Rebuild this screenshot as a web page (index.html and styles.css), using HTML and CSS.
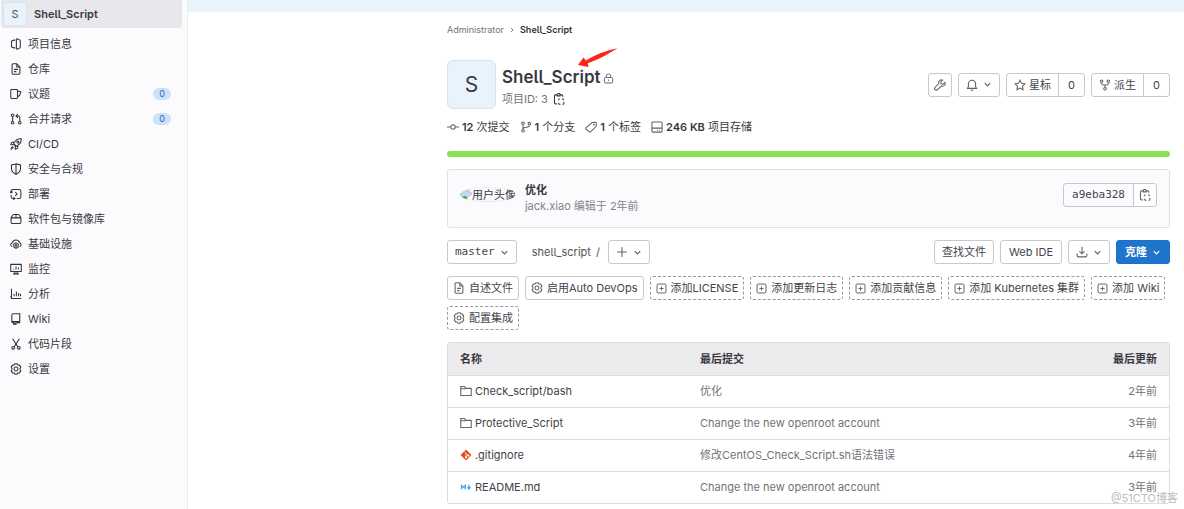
FILE: index.html
```html
<!DOCTYPE html>
<html lang="zh-CN">
<head>
<meta charset="utf-8">
<meta name="viewport" content="width=device-width, initial-scale=1">
<title>Shell_Script</title>
<link rel="stylesheet" href="styles.css">
</head>
<body>
<svg class="sprite" aria-hidden="true">
  <symbol id="i-info" viewBox="0 0 16 16"><path d="M7 2.500 3.500 3.500A1.500 1.500 0 0 0 2 5v6a1.500 1.500 0 0 0 1.500 1.500l3.500 1M8.500 2.200v11.600l1 1.200 3.300-1.500a1.500 1.500 0 0 0 .9-1.400V3.900a1.500 1.500 0 0 0-.9-1.400L9.500 1z"/></symbol>
  <symbol id="i-doc" viewBox="0 0 16 16"><path d="M9 1H4a1.200 1.200 0 0 0-1.200 1.200v11.600A1.200 1.200 0 0 0 4 15h8a1.200 1.200 0 0 0 1.200-1.200V5.200zM9 1v4.200h4.200M5.500 8.500h5M5.500 11.500h3"/></symbol>
  <symbol id="i-issue" viewBox="0 0 16 16"><path d="M10 3.200v9.600a1.200 1.200 0 0 1-1.200 1.200H2.200A1.200 1.200 0 0 1 1 12.800V3.200A1.200 1.200 0 0 1 2.200 2H8.800A1.200 1.200 0 0 1 10 3.200zM10 4l4.500 1.200-1.500 4.300L10 12"/></symbol>
  <symbol id="i-merge" viewBox="0 0 16 16"><circle cx="3.500" cy="3" r="1.700"/><circle cx="3.500" cy="13" r="1.700"/><circle cx="13" cy="13" r="1.700"/><path d="M3.500 5v6M13 11V6a2 2 0 0 0-2-2H8.500M10.500 1.500 8 4l2.500 2.500"/></symbol>
  <symbol id="i-rocket" viewBox="0 0 16 16"><path d="M15 1c-5-.3-8 2-10 6.500L8.500 11C13 9 15.300 6 15 1zM6 5.500l-3.500.3L1 8.800l4 .2M10.500 10l-.3 3.500-3 1.500-.2-4M3.500 11 1 15l4-2.500M4.500 8l3.500 3.500"/><circle cx="10.500" cy="5.500" r="1.200"/></symbol>
  <symbol id="i-shield" viewBox="0 0 16 16"><path d="M8 1.200 2 2.500V8c0 3 2.300 5.200 6 7 3.700-1.800 6-4 6-7V2.500zM8 1.200V15"/></symbol>
  <symbol id="i-deploy" viewBox="0 0 16 16"><path d="M1.500 6V4.500A2.500 2.500 0 0 1 4 2h8a2.500 2.500 0 0 1 2.500 2.500v7A2.500 2.500 0 0 1 12 14H9M1.500 9v2.500A2.500 2.500 0 0 0 4 14h2M0 4.500l1.500 2 2-1.500M7 5.500 9.500 8 7 10.500M4.500 12.200 6.500 14l-2 1.700"/></symbol>
  <symbol id="i-package" viewBox="0 0 16 16"><path d="M1.500 6.500h13v6.300a1.200 1.200 0 0 1-1.200 1.200H2.700a1.200 1.200 0 0 1-1.200-1.200zM1.500 6.500 3.700 2.800A1.500 1.500 0 0 1 5 2h6a1.500 1.500 0 0 1 1.300.8l2.200 3.700M8 2v4.500"/></symbol>
  <symbol id="i-cloud" viewBox="0 0 16 16"><path d="M2.800 11.500a2.800 2.800 0 0 1 .4-5.300A5 5 0 0 1 12.700 6 3 3 0 0 1 13.200 11.500M8 6.500l3 1.700v3.700L8 13.700l-3-1.800V8.200z"/><circle cx="8" cy="10.100" r="1"/></symbol>
  <symbol id="i-monitor" viewBox="0 0 16 16"><path d="M1 1.800h14v9.400H1zM4 14.500h8M6.500 11.500v3M9.500 11.500v3M4.800 8.800V7.500M8 8.800V4.500M11.200 8.800V6"/></symbol>
  <symbol id="i-chart" viewBox="0 0 16 16"><path d="M2 1v13h13M.5 11.500H2M5.500 11V8M8.500 11V4.500M11.500 11V6.500M14 11V8"/></symbol>
  <symbol id="i-book" viewBox="0 0 16 16"><path d="M4.500 13H4a1.500 1.500 0 0 1-1.500-1.500v-9A1.500 1.500 0 0 1 4 1h9v12H9M3 11.500h10M5 11.500v3.800l1.500-1 1.500 1v-3.800"/></symbol>
  <symbol id="i-scissors" viewBox="0 0 16 16"><path d="m3.500 1 6.800 10.500M12.500 1 5.700 11.500"/><circle cx="4.200" cy="13" r="1.800"/><circle cx="11.800" cy="13" r="1.800"/></symbol>
  <symbol id="i-gear" viewBox="0 0 16 16"><path d="M6.500 1h3l1 1.600 2.100.2 1.800 2.700-1 1.700v1.600l1 1.700-1.800 2.700-2.100.2-1 1.600h-3l-1-1.600-2.100-.2-1.800-2.700 1-1.700V7.200l-1-1.700 1.800-2.700 2.100-.2z"/><circle cx="8" cy="8" r="2.600"/></symbol>
  <symbol id="i-lock" viewBox="0 0 16 16"><rect x="2" y="6.500" width="12" height="8" rx="1.500"/><path d="M4.800 6.500V4.500a3.200 3.200 0 0 1 6.400 0v2M8 9.500v2"/></symbol>
  <symbol id="i-copy" viewBox="0 0 16 16"><path d="M5 14.500H3.500A1.500 1.500 0 0 1 2 13V4a1.500 1.500 0 0 1 1.500-1.500H5M10 2.500h1.500A1.500 1.500 0 0 1 13 4v1M5.500 3.800V2.500a2 2 0 0 1 4 0v1.300zM7.500 9.500V9a1 1 0 0 1 1-1h.5M12 8h1a1 1 0 0 1 1 1v.5M14.500 12v2a1 1 0 0 1-1 1h-.8M10 15H8.500a1 1 0 0 1-1-1v-1"/></symbol>
  <symbol id="i-commit" viewBox="0 0 16 16"><circle cx="8" cy="8" r="2.900"/><path d="M0 8h5M11 8h5"/></symbol>
  <symbol id="i-branch" viewBox="0 0 16 16"><circle cx="4" cy="3" r="1.700"/><circle cx="4" cy="13" r="1.700"/><circle cx="12.500" cy="3.500" r="1.700"/><path d="M4 5v6M12.500 5.500C12.500 8 10 8 8 8.300 5.500 8.600 4 9 4 11"/></symbol>
  <symbol id="i-tag" viewBox="0 0 16 16"><path d="M9.500 2 14 1.800a1 1 0 0 1 1 1V7l-7.300 7.200a1.500 1.500 0 0 1-2.100 0L1.500 11a1.500 1.500 0 0 1 0-2.100z"/><circle cx="11.800" cy="4.800" r=".6"/></symbol>
  <symbol id="i-disk" viewBox="0 0 16 16"><rect x="1.200" y="1.200" width="13.600" height="13.600" rx="1.500"/><path d="M1.200 9.500h13.600M8 12.300h1M11 12.300h1"/></symbol>
  <symbol id="i-wrench" viewBox="0 0 16 16"><path d="M14.500 4.500 12 7l-2.500-.5L9 4l2.500-2.500C9 .3 5.800 2 6.300 6L1.500 11a2.200 2.200 0 0 0 3.300 3.300L9.800 9.500c4 .8 5.900-2.200 4.700-5z"/><path d="M3.300 12.700h.1"/></symbol>
  <symbol id="i-bell" viewBox="0 0 16 16"><path d="M1.800 12.500h12.400l-1.400-2.300V6.500a4.800 4.800 0 0 0-9.600 0v3.700zM6.200 14.500q1.800 1.200 3.600 0M8 1.500V.5"/></symbol>
  <symbol id="i-star" viewBox="0 0 16 16"><path d="m8 1.500 2 4.300 4.700.6-3.400 3.300.8 4.700L8 12.200l-4.100 2.200.8-4.700L1.300 6.400 6 5.800z"/></symbol>
  <symbol id="i-fork" viewBox="0 0 16 16"><circle cx="3.500" cy="3" r="1.700"/><circle cx="12.500" cy="3" r="1.700"/><circle cx="8" cy="13" r="1.700"/><path d="M3.500 5v.5a2.500 2.500 0 0 0 2.500 2.500h4a2.500 2.500 0 0 0 2.500-2.500V5M8 8v3"/></symbol>
  <symbol id="i-down" viewBox="0 0 16 16"><path d="m4 6 4 4 4-4"/></symbol>
  <symbol id="i-right" viewBox="0 0 16 16"><path d="m6 4 4 4-4 4"/></symbol>
  <symbol id="i-plus" viewBox="0 0 16 16"><path d="M8 1.500v13M1.500 8h13"/></symbol>
  <symbol id="i-download" viewBox="0 0 16 16"><path d="M8 1v9.500M4.500 7 8 10.500 11.500 7M1.500 10v3a1.500 1.500 0 0 0 1.500 1.500h10a1.500 1.500 0 0 0 1.500-1.500v-3"/></symbol>
  <symbol id="i-add" viewBox="0 0 16 16"><rect x="1.500" y="1.500" width="13" height="13" rx="1.500"/><path d="M8 5v6M5 8h6"/></symbol>
  <symbol id="i-folder" viewBox="0 0 16 16"><path d="M1 14V2h5l1.500 2.500H15V14zM1 5h6.500"/></symbol>
  <symbol id="i-git" viewBox="0 0 16 16"><path d="M8 1.200 14.800 8 8 14.800 1.200 8z" fill="#e64a19" stroke="#e64a19" stroke-width="1"/><path d="M6 3.500 8 5.500V11M8 6l3 3" stroke="#fff" stroke-width="1"/><circle cx="8" cy="11" r=".8" fill="#fff" stroke="#fff"/><circle cx="11" cy="8.800" r=".8" fill="#fff" stroke="#fff"/></symbol>
  <symbol id="i-md" viewBox="0 0 16 16"><path d="M2 11V6l2.500 2.500L7 6v5M12 5v5M9.800 8.300l2.200 2.200 2.200-2.200" stroke="#42a5f5" stroke-width="1.800"/></symbol>
</svg>

<div class="page">
  <aside class="sidebar">
    <a class="context" href="#"><span class="avatar-sm">S</span>Shell_Script</a>
    <nav class="menu" aria-label="项目导航">
      <a href="#"><svg class="icon"><use href="#i-info"/></svg>项目信息</a>
      <a href="#"><svg class="icon"><use href="#i-doc"/></svg>仓库</a>
      <a href="#"><svg class="icon"><use href="#i-issue"/></svg>议题<span class="badge">0</span></a>
      <a href="#"><svg class="icon"><use href="#i-merge"/></svg>合并请求<span class="badge">0</span></a>
      <a href="#"><svg class="icon"><use href="#i-rocket"/></svg>CI/CD</a>
      <a href="#"><svg class="icon"><use href="#i-shield"/></svg>安全与合规</a>
      <a href="#"><svg class="icon"><use href="#i-deploy"/></svg>部署</a>
      <a href="#"><svg class="icon"><use href="#i-package"/></svg>软件包与镜像库</a>
      <a href="#"><svg class="icon"><use href="#i-cloud"/></svg>基础设施</a>
      <a href="#"><svg class="icon"><use href="#i-monitor"/></svg>监控</a>
      <a href="#"><svg class="icon"><use href="#i-chart"/></svg>分析</a>
      <a href="#"><svg class="icon"><use href="#i-book"/></svg>Wiki</a>
      <a href="#"><svg class="icon"><use href="#i-scissors"/></svg>代码片段</a>
      <a href="#"><svg class="icon"><use href="#i-gear"/></svg>设置</a>
    </nav>
  </aside>

  <div class="content">
    <div class="banner"></div>
    <main class="main">
      <nav class="crumbs" aria-label="面包屑">
        <a href="#">Administrator</a>
        <svg class="icon icon-xs"><use href="#i-right"/></svg>
        <a class="current" href="#">Shell_Script</a>
      </nav>

      <header class="project">
        <div class="avatar">S</div>
        <div class="project-name">
          <h1>Shell_Script <svg class="icon icon-lock"><use href="#i-lock"/></svg>
            <svg class="pointer" viewBox="0 0 40 20" aria-hidden="true"><path d="M0 17 5.500 9.500 8 12.500C17 7 28 2.500 39.500.3 30 6 20 12 9.800 15.300L10.500 19z"/></svg>
          </h1>
          <p class="project-id">项目ID: 3 <button class="bare" aria-label="复制项目ID"><svg class="icon dark"><use href="#i-copy"/></svg></button></p>
        </div>
        <div class="actions">
          <button class="btn square" aria-label="管理"><svg class="icon"><use href="#i-wrench"/></svg></button>
          <button class="btn" aria-label="通知"><svg class="icon"><use href="#i-bell"/></svg><svg class="icon caret"><use href="#i-down"/></svg></button>
          <div class="group"><button class="btn"><svg class="icon"><use href="#i-star"/></svg>星标</button><a class="btn count" href="#">0</a></div>
          <div class="group"><button class="btn"><svg class="icon"><use href="#i-fork"/></svg>派生</button><a class="btn count" href="#">0</a></div>
        </div>
      </header>

      <nav class="stats" aria-label="项目统计">
        <a href="#"><svg class="icon"><use href="#i-commit"/></svg><span><b>12</b> 次提交</span></a>
        <a href="#"><svg class="icon"><use href="#i-branch"/></svg><span><b>1</b> 个分支</span></a>
        <a href="#"><svg class="icon"><use href="#i-tag"/></svg><span><b>1</b> 个标签</span></a>
        <a href="#"><svg class="icon"><use href="#i-disk"/></svg><span><b>246 KB</b> 项目存储</span></a>
      </nav>

      <div class="languages"></div>

      <section class="commit">
        <div class="broken"><svg viewBox="0 0 14 12"><path d="M.5.5h9l4 4v7H.5z" fill="#c0d6f5" stroke="#a9b3c1"/><path d="M1 11q4-6 8-1l1 1z" fill="#49a832"/><path d="M7 12 14 6v6z" fill="#fff"/></svg><span>用户头像</span></div>
        <div class="commit-text">
          <a class="commit-title" href="#">优化</a>
          <p>jack.xiao 编辑于 2年前</p>
        </div>
        <div class="group"><span class="btn mono sha">a9eba328</span><button class="btn square" aria-label="复制提交SHA"><svg class="icon"><use href="#i-copy"/></svg></button></div>
      </section>

      <div class="tree">
        <button class="btn mono">master<svg class="icon caret"><use href="#i-down"/></svg></button>
        <div class="path"><a href="#">shell_script</a><span>/</span></div>
        <button class="btn" aria-label="添加"><svg class="icon"><use href="#i-plus"/></svg><svg class="icon caret"><use href="#i-down"/></svg></button>
        <div class="actions">
          <a class="btn" href="#">查找文件</a>
          <button class="btn wide">Web IDE</button>
          <button class="btn" aria-label="下载"><svg class="icon"><use href="#i-download"/></svg><svg class="icon caret"><use href="#i-down"/></svg></button>
          <button class="btn wide primary">克隆<svg class="icon caret"><use href="#i-down"/></svg></button>
        </div>
      </div>

      <div class="shortcuts">
        <a class="btn" href="#"><svg class="icon"><use href="#i-doc"/></svg>自述文件</a>
        <a class="btn" href="#"><svg class="icon"><use href="#i-gear"/></svg>启用Auto DevOps</a>
        <a class="btn dashed" href="#"><svg class="icon small"><use href="#i-add"/></svg>添加LICENSE</a>
        <a class="btn dashed" href="#"><svg class="icon small"><use href="#i-add"/></svg>添加更新日志</a>
        <a class="btn dashed" href="#"><svg class="icon small"><use href="#i-add"/></svg>添加贡献信息</a>
        <a class="btn dashed" href="#"><svg class="icon small"><use href="#i-add"/></svg>添加 Kubernetes 集群</a>
        <a class="btn dashed" href="#"><svg class="icon small"><use href="#i-add"/></svg>添加 Wiki</a>
        <a class="btn dashed" href="#"><svg class="icon"><use href="#i-gear"/></svg>配置集成</a>
      </div>

      <div class="files">
        <table>
          <thead><tr><th class="c-name">名称</th><th>最后提交</th><th class="c-date">最后更新</th></tr></thead>
          <tbody>
            <tr><td><a href="#"><svg class="icon"><use href="#i-folder"/></svg>Check_script/bash</a></td><td class="muted">优化</td><td class="muted c-date">2年前</td></tr>
            <tr><td><a href="#"><svg class="icon"><use href="#i-folder"/></svg>Protective_Script</a></td><td class="muted">Change the new openroot account</td><td class="muted c-date">3年前</td></tr>
            <tr><td><a href="#"><svg class="icon"><use href="#i-git"/></svg>.gitignore</a></td><td class="muted">修改CentOS_Check_Script.sh语法错误</td><td class="muted c-date">4年前</td></tr>
            <tr><td><a href="#"><svg class="icon"><use href="#i-md"/></svg>README.md</a></td><td class="muted">Change the new openroot account</td><td class="muted c-date">3年前</td></tr>
          </tbody>
        </table>
      </div>
    </main>
  </div>
  <div class="watermark">@51CTO博客</div>
</div>
</body>
</html>
```
FILE: styles.css
```css
* { box-sizing: border-box; }

body {
  margin: 0;
  background: #fff;
  color: #3a383f;
  font: 11px/16px Inter, "Noto Sans CJK SC", sans-serif;
  font-feature-settings: "cv05";
}

a { color: inherit; text-decoration: none; }
h1, p { margin: 0; }
button { font: inherit; font-feature-settings: inherit; color: inherit; cursor: pointer; }
b { font-weight: 600; }

.sprite { position: absolute; width: 0; height: 0; }

.icon {
  width: 12px;
  height: 12px;
  flex: none;
  fill: none;
  stroke: #626168;
  stroke-width: 1.4;
}
.icon.small { width: 11px; height: 11px; }
.icon.caret { width: 11px; height: 11px; stroke-width: 1.7; }
.icon.dark { stroke: #333238; }
.icon-xs { width: 8px; height: 8px; stroke-width: 1.6; }

.page { position: relative; display: flex; min-height: 100vh; overflow: hidden; }

/* Sidebar */
.sidebar {
  flex: none;
  width: 188px;
  background: #fbfafd;
  border-right: 1px solid #ececef;
}
.context {
  display: flex;
  align-items: center;
  gap: 7px;
  height: 28px;
  margin: 0 5px 0 1px;
  padding-left: 2px;
  background: #e8e7ec;
  border-radius: 0 0 3px 3px;
  font-weight: 600;
}
.avatar-sm {
  width: 24px;
  height: 24px;
  border: 1px solid #d6e2ee;
  border-radius: 3px;
  background: #e9f3fc;
  color: #535158;
  font-weight: 400;
  line-height: 22px;
  text-align: center;
}
.menu { display: flex; flex-direction: column; padding-top: 3px; }
.menu a {
  display: flex;
  align-items: center;
  gap: 6px;
  height: 25px;
  padding: 0 16px 0 10px;
}
.menu .icon { stroke: #333238; }
.badge {
  margin-left: auto;
  min-width: 18px;
  border-radius: 6px;
  background: #cbe2f9;
  color: #2f68b4;
  font-size: 9px;
  line-height: 12px;
  text-align: center;
}

/* Content column */
.content { flex: 1; min-width: 0; }
.banner { height: 12px; background: #e9f3fc; }
.main { padding: 0 14px 6px 26%; }

.crumbs {
  display: flex;
  align-items: center;
  gap: 4px;
  height: 36px;
  color: #737278;
  font-size: 9px;
}
.crumbs .current { color: #333238; font-weight: 600; }

.project { display: flex; align-items: center; margin-top: 12px; }
.avatar {
  width: 49px;
  height: 49px;
  margin-right: 6px;
  border: 1px solid #d6e2ee;
  border-radius: 6px;
  background: #e9f3fc;
  font-size: 21px;
  line-height: 47px;
  text-align: center;
}
.project-name { padding-top: 4px; }
h1 {
  position: relative;
  font-size: 17px;
  font-weight: 600;
  line-height: 24px;
}
.icon-lock { width: 11px; height: 11px; margin-left: -2px; vertical-align: -1px; }
.pointer {
  position: absolute;
  top: -17px;
  left: 76px;
  width: 40px;
  height: 20px;
  fill: #fb2416;
}
.project-id { display: flex; align-items: center; gap: 5px; height: 20px; color: #737278; }
.bare { display: flex; padding: 0; border: 0; background: none; }

.actions { display: flex; gap: 6px; margin-left: auto; }
.group { display: flex; }
.btn {
  display: flex;
  align-items: center;
  justify-content: center;
  gap: 3px;
  height: 24px;
  padding: 0 7px;
  border: 1px solid #c8c7cc;
  border-radius: 3px;
  background: #fff;
  color: #45434a;
  line-height: 16px;
  white-space: nowrap;
}
.btn .caret { margin-left: 1px; margin-right: -1px; }
.square { width: 24px; padding: 0; }
.count { width: 27px; padding: 0; }
.wide { padding: 0 8px; }
.group .btn:first-child { border-radius: 3px 0 0 3px; }
.group .btn:last-child { margin-left: -1px; border-radius: 0 3px 3px 0; }
.primary { border-color: #1f6fc8; background: #1f75cb; color: #fff; font-weight: 600; }
.primary .icon { stroke: #fff; }
.mono { font-family: "DejaVu Sans Mono", monospace; font-size: 11px; }
.dashed { border-style: dashed; border-color: #99989e; }

.stats { display: flex; gap: 10px; margin-top: 10px; }
.stats a { display: flex; align-items: center; gap: 3px; }

.languages { height: 6px; margin-top: 16px; border-radius: 3px; background: #89e051; }

.commit {
  display: flex;
  align-items: center;
  margin-top: 12px;
  height: 59px;
  padding: 0 12px 8px;
  border: 1px solid #e1e0e4;
  border-radius: 3px;
  background: #fbfafd;
}
.broken {
  display: flex;
  align-items: center;
  width: 56px;
  height: 15px;
  margin-right: 9px;
  border-radius: 50%;
  box-shadow: inset 0 0 0 1px #ececf0;
  overflow: hidden;
  white-space: nowrap;
}
.broken svg { flex: none; width: 12px; height: 11px; }
.commit-text { padding-top: 6px; }
.commit-title { font-weight: 600; }
.commit-text p { color: #85848b; }
.commit .group { margin-left: auto; }
.sha { padding: 0 8px; background: #fbfafd; }

.tree { display: flex; align-items: center; margin-top: 12px; }
.path { display: flex; gap: 5px; margin: 0 8px 0 15px; color: #535158; }

.shortcuts { display: flex; flex-wrap: wrap; gap: 6px; margin-top: 12px; }
.shortcuts .btn { gap: 4px; padding: 0 5px; }

/* File table */
.files {
  margin-top: 12px;
  border: 1px solid #dcdcde;
  border-radius: 3px;
  overflow: hidden;
}
table { width: 100%; border-collapse: collapse; table-layout: fixed; }
th {
  height: 32px;
  padding: 0 12px;
  background: #ececef;
  font-weight: 600;
  text-align: left;
}
td { height: 32px; padding: 0 12px; border-top: 1px solid #dcdcde; color: #434248; }
td a { display: flex; align-items: center; gap: 3px; }
.c-name { width: 240px; }
th.c-date, td.c-date { width: 120px; text-align: right; }
td.muted { color: #737278; }

.watermark {
  position: absolute;
  right: 6px;
  bottom: 4px;
  color: #bdbdc2;
}
```
